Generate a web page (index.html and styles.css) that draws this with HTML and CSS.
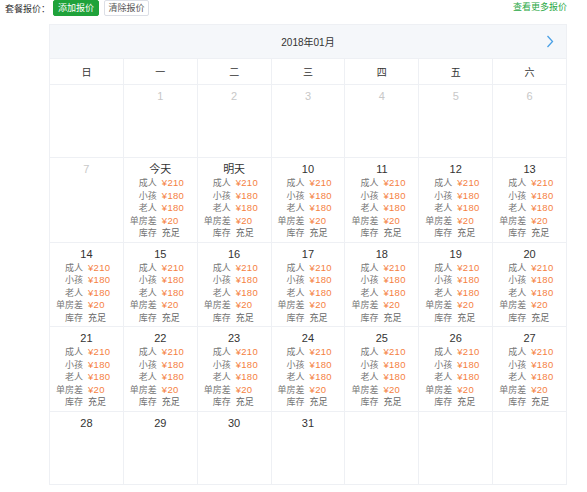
FILE: index.html
```html
<!DOCTYPE html>
<html lang="zh">
<head>
<meta charset="utf-8">
<link rel="stylesheet" href="styles.css">
</head>
<body>
<div class="toolbar">
  <span class="label">套餐报价：</span>
  <button class="btn btn-primary">添加报价</button>
  <button class="btn btn-plain">清除报价</button>
  <span class="spacer"></span>
  <a class="more">查看更多报价</a>
</div>
<div class="calendar">
  <div class="cal-head">
    <span class="title">2018年01月</span>
    <svg class="next" width="8" height="13" viewBox="0 0 8 13"><path d="M1.5 1 L6.5 6.5 L1.5 12" fill="none" stroke="#4aa0e6" stroke-width="1.3"/></svg>
  </div>
  <div class="grid" id="grid">
    <div class="wd">日</div><div class="wd">一</div><div class="wd">二</div><div class="wd">三</div><div class="wd">四</div><div class="wd">五</div><div class="wd">六</div>
  </div>
</div>
<script>
(function(){
  var g=document.getElementById('grid');
  function cell(html){var d=document.createElement('div');d.className='cell';d.innerHTML=html;g.appendChild(d);}
  var info='<div class="info"><span class="k">成人</span><span class="v">¥210</span><span class="k">小孩</span><span class="v">¥180</span><span class="k">老人</span><span class="v">¥180</span><span class="k">单房差</span><span class="v">¥20</span><span class="k">库存</span><span class="v n">充足</span></div>';
  cell('');
  for(var d=1;d<=31;d++){
    if(d<=7){cell('<div class="date past">'+d+'</div>');continue;}
    var label=d==8?'今天':d==9?'明天':d;
    var cls=d<=9?'date word':'date';
    cell('<div class="'+cls+'">'+label+'</div>'+(d<=27?info:''));
  }
  cell('');cell('');cell('');
})();
</script>
</body>
</html>
```
FILE: styles.css
```css
* { box-sizing: border-box; }
body {
  margin: 0;
  font-family: "Liberation Sans", "Noto Sans CJK SC", sans-serif;
  color: #333;
  background: #fff;
}
.toolbar {
  display: flex;
  align-items: center;
  height: 16px;
  padding-left: 5px;
  margin-right: 20px;
  font-size: 9px;
}
.label { color: #333; margin-right: 3px; white-space: nowrap; }
.btn {
  font-family: inherit;
  font-size: 9px;
  height: 16px;
  padding: 0;
  border-radius: 2px;
  margin: 0;
  line-height: 14px;
  white-space: nowrap;
  text-align: center;
}
.btn-primary {
  background: #1fa23a;
  border: 1px solid #1fa23a;
  color: #fff;
  width: 46px;
}
.btn-plain {
  background: #fff;
  border: 1px solid #dcdfe6;
  color: #555;
  margin-left: 5px;
  width: 45px;
}
.spacer { flex: 1; }
.more { color: #2aa845; font-size: 9px; margin-top: -4px; white-space: nowrap; }
.calendar {
  margin: 8px 0 0 49px;
  width: 518px;
  border-top: 1px solid #eef0f4;
  border-left: 1px solid #eef0f4;
}
.cal-head {
  height: 33px;
  background: #f5f7fa;
  display: flex;
  align-items: center;
  justify-content: center;
  position: relative;
  border-right: 1px solid #eef0f4;
}
.title { font-size: 10px; color: #333; }
.next { position: absolute; right: 12px; top: 10px; }
.grid {
  display: grid;
  grid-template-columns: repeat(7, 1fr);
}
.wd {
  height: 27px;
  display: flex;
  align-items: center;
  justify-content: center;
  font-size: 10px;
  color: #333;
  border-right: 1px solid #eef0f4;
  border-bottom: 1px solid #eef0f4;
  border-top: 1px solid #eef0f4;
}
.cell {
  min-height: 73px;
  padding: 3px 0 2px;
  border-right: 1px solid #eef0f4;
  border-bottom: 1px solid #eef0f4;
}
.date {
  text-align: center;
  font-size: 11px;
  line-height: 16px;
  color: #333;
}
.date.past { color: #c8c8c8; }
.date.word { font-size: 11px; }
.info {
  display: grid;
  grid-template-columns: 33px 1fr;
  column-gap: 5px;
  font-size: 9px;
  line-height: 12.5px;
}
.k { text-align: right; color: #777; white-space: nowrap; }
.v { color: #f5813f; white-space: nowrap; letter-spacing: 0.3px; font-size: 9.5px; }
.v.n { color: #666; font-size: 9px; letter-spacing: 0; }
```
